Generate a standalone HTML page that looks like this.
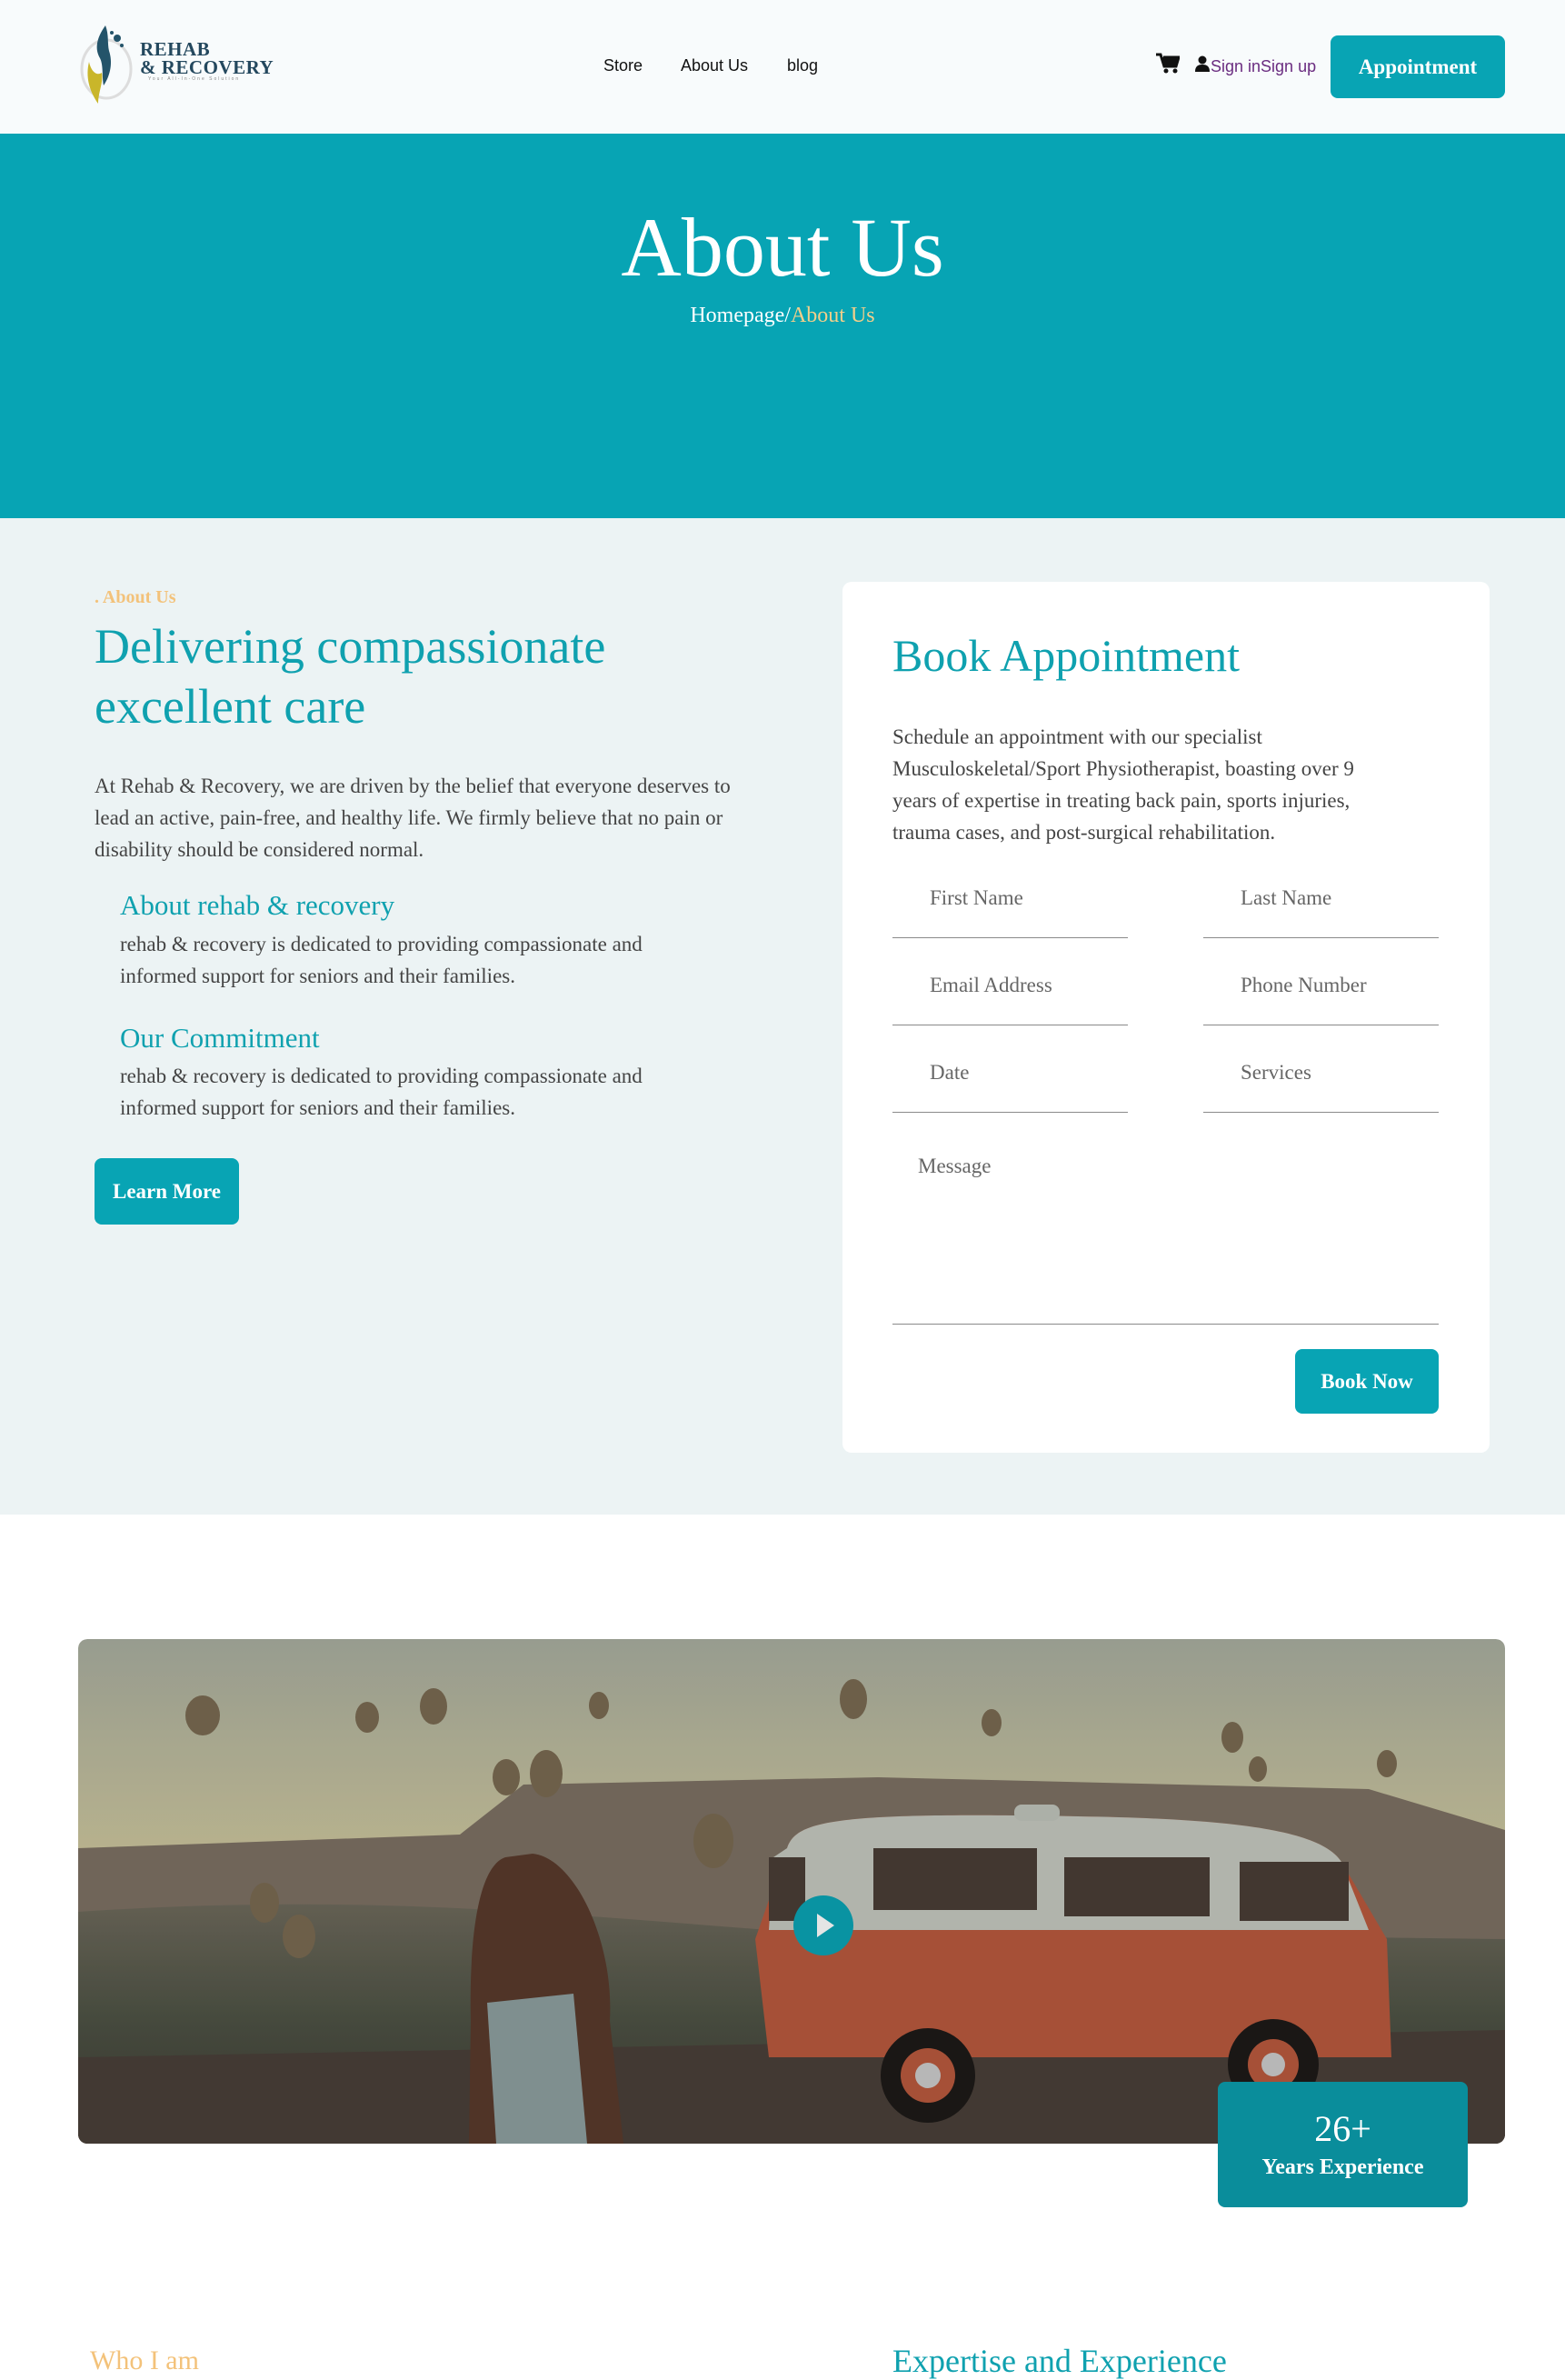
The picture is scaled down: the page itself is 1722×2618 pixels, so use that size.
<!DOCTYPE html>
<html><head><meta charset="utf-8">
<style>
*{margin:0;padding:0;box-sizing:border-box}
body{width:1722px;height:2592px;overflow:hidden;background:#fff;font-family:"Liberation Serif",serif;position:relative}
.abs{position:absolute}
.nav{left:0;top:0;width:1722px;height:147px;background:#f8fbfc}
.navlink{font-family:"Liberation Sans",sans-serif;font-size:18px;color:#111;top:62px}
.btn{background:#08a4b4;color:#fff;border-radius:8px;font-weight:bold;display:flex;align-items:center;justify-content:center}
.hero{left:0;top:147px;width:1722px;height:423px;background:#07a4b4}
.sec{left:0;top:570px;width:1722px;height:1096px;background:#ecf3f4}
.teal{color:#0fa1af}
.p{font-size:23px;line-height:35px;color:#444}
.card{left:927px;top:640px;width:712px;height:958px;background:#fff;border-radius:10px}
.field{border-bottom:1.5px solid #8a8a8a;font-size:23px;color:#666;padding-left:41px}
</style></head><body>
<div class="abs nav"></div>
<svg class="abs" style="left:84px;top:24px" width="70" height="92" viewBox="0 0 70 92">
<ellipse cx="33" cy="52" rx="27" ry="32" fill="none" stroke="#ddd" stroke-width="3"/>
<path d="M32 4 C22 18 20 30 26 40 C30 48 28 60 30 70 C38 58 40 44 36 32 C34 24 36 14 32 4Z" fill="#24546a"/>
<path d="M14 44 C10 60 14 76 24 90 C24 78 30 66 28 56 C22 60 16 54 14 44Z" fill="#c9b62a"/>
<circle cx="45" cy="18" r="4" fill="#24546a"/><circle cx="39" cy="12" r="2" fill="#24546a"/><circle cx="50" cy="26" r="2" fill="#24546a"/>
</svg>
<div class="abs" style="left:154px;top:44px;font-size:21px;line-height:20px;color:#24485e;font-weight:bold;letter-spacing:0.5px">REHAB<br>&amp; RECOVERY</div>
<div class="abs" style="left:163px;top:84px;font-size:5px;color:#888;letter-spacing:2px;font-family:'Liberation Sans',sans-serif">Your All-In-One Solution</div>
<div class="abs navlink" style="left:664px">Store</div>
<div class="abs navlink" style="left:749px">About Us</div>
<div class="abs navlink" style="left:866px">blog</div>
<svg class="abs" style="left:1272px;top:58px" width="26" height="24" viewBox="0 0 26 24"><path d="M0 2h5l4 13h13l3-10H8" fill="none" stroke="#111" stroke-width="3"/><path d="M7 5h18l-3 10H10z" fill="#111"/><circle cx="11" cy="20" r="2.5" fill="#111"/><circle cx="21" cy="20" r="2.5" fill="#111"/></svg>
<svg class="abs" style="left:1315px;top:61px" width="16" height="18" viewBox="0 0 16 18"><circle cx="8" cy="5" r="4.5" fill="#111"/><path d="M0 18c0-6 3-8 8-8s8 2 8 8z" fill="#111"/></svg>
<div class="abs" style="left:1332px;top:63px;font-family:'Liberation Sans',sans-serif;font-size:18px;color:#6a2c80">Sign inSign up</div>
<div class="abs btn" style="left:1464px;top:39px;width:192px;height:69px;font-size:23px">Appointment</div>

<div class="abs hero"></div>
<div class="abs" style="left:0;top:212px;width:1722px;text-align:center;color:#fff;font-size:92px;line-height:120px">About Us</div>
<div class="abs" style="left:0;top:334px;width:1722px;text-align:center;color:#fff;font-size:24px">Homepage/<span style="color:#f3cf8a">About Us</span></div>

<div class="abs sec"></div>
<div class="abs" style="left:104px;top:646px;font-size:20px;color:#f3c27a;font-weight:bold">. About Us</div>
<div class="abs teal" style="left:104px;top:678px;font-size:54px;line-height:66px">Delivering compassionate<br>excellent care</div>
<div class="abs p" style="left:104px;top:847px;width:735px">At Rehab &amp; Recovery, we are driven by the belief that everyone deserves to lead an active, pain-free, and healthy life. We firmly believe that no pain or disability should be considered normal.</div>
<div class="abs teal" style="left:132px;top:978px;font-size:31px">About rehab &amp; recovery</div>
<div class="abs p" style="left:132px;top:1021px;width:640px">rehab &amp; recovery is dedicated to providing compassionate and informed support for seniors and their families.</div>
<div class="abs teal" style="left:132px;top:1124px;font-size:31px">Our Commitment</div>
<div class="abs p" style="left:132px;top:1166px;width:640px">rehab &amp; recovery is dedicated to providing compassionate and informed support for seniors and their families.</div>
<div class="abs btn" style="left:104px;top:1274px;width:159px;height:73px;font-size:23px">Learn More</div>

<div class="abs card"></div>
<div class="abs teal" style="left:982px;top:692px;font-size:50px">Book Appointment</div>
<div class="abs p" style="left:982px;top:793px;width:560px">Schedule an appointment with our specialist Musculoskeletal/Sport Physiotherapist, boasting over 9 years of expertise in treating back pain, sports injuries, trauma cases, and post-surgical rehabilitation.</div>
<div class="abs field" style="left:982px;top:975px;width:259px;height:57px">First Name</div>
<div class="abs field" style="left:1324px;top:975px;width:259px;height:57px">Last Name</div>
<div class="abs field" style="left:982px;top:1071px;width:259px;height:57px">Email Address</div>
<div class="abs field" style="left:1324px;top:1071px;width:259px;height:57px">Phone Number</div>
<div class="abs field" style="left:982px;top:1167px;width:259px;height:57px">Date</div>
<div class="abs field" style="left:1324px;top:1167px;width:259px;height:57px">Services</div>
<div class="abs field" style="left:982px;top:1270px;width:601px;height:187px;padding-left:28px">Message</div>
<div class="abs btn" style="left:1425px;top:1484px;width:158px;height:71px;font-size:23px">Book Now</div>

<svg class="abs" style="left:86px;top:1803px;border-radius:10px" width="1570" height="555" viewBox="0 0 1570 555">
<defs>
<linearGradient id="sky" x1="0" y1="0" x2="0" y2="1"><stop offset="0" stop-color="#a9aea0"/><stop offset="0.45" stop-color="#cfc89e"/><stop offset="1" stop-color="#8f8a78"/></linearGradient>
<linearGradient id="gr" x1="0" y1="0" x2="0" y2="1"><stop offset="0" stop-color="#6e6a5c"/><stop offset="0.5" stop-color="#4d5244"/><stop offset="1" stop-color="#3f3a34"/></linearGradient>
<clipPath id="c"><rect width="1570" height="555" rx="10"/></clipPath>
</defs>
<g clip-path="url(#c)">
<rect width="1570" height="555" fill="url(#sky)"/>
<path d="M0 230 L420 215 L490 160 L880 152 L1420 165 L1570 210 L1570 555 L0 555Z" fill="#7d7164"/>
<path d="M0 300 C300 280 500 300 760 320 L1570 330 L1570 555 L0 555Z" fill="url(#gr)"/>
<path d="M0 460 L1570 430 L1570 555 L0 555Z" fill="#4a4039"/>
<g fill="#7a6a52"><ellipse cx="137" cy="84" rx="19" ry="22"/><ellipse cx="318" cy="86" rx="13" ry="17"/><ellipse cx="391" cy="74" rx="15" ry="20"/><ellipse cx="573" cy="73" rx="11" ry="15"/><ellipse cx="853" cy="66" rx="15" ry="22"/><ellipse cx="1005" cy="92" rx="11" ry="15"/><ellipse cx="471" cy="152" rx="15" ry="20"/><ellipse cx="515" cy="148" rx="18" ry="26"/><ellipse cx="699" cy="222" rx="22" ry="30"/><ellipse cx="1270" cy="108" rx="12" ry="17"/><ellipse cx="1298" cy="143" rx="10" ry="14"/><ellipse cx="1440" cy="137" rx="11" ry="15"/><ellipse cx="243" cy="327" rx="18" ry="24"/><ellipse cx="205" cy="290" rx="16" ry="22"/></g>
<path d="M780 230 C790 200 830 190 1100 195 C1300 198 1370 215 1390 245 L1440 330 L1445 460 L760 460 L745 330Z" fill="#b95a3e"/>
<path d="M780 230 C790 200 830 190 1100 195 C1300 198 1370 215 1390 245 L1420 320 L760 320 L765 240Z" fill="#c6c9c0"/>
<rect x="875" y="230" width="180" height="68" fill="#4a3e36"/><rect x="1085" y="240" width="160" height="65" fill="#4a3e36"/><rect x="1278" y="245" width="120" height="65" fill="#4a3e36"/><rect x="760" y="240" width="40" height="70" fill="#4a3e36"/>
<rect x="1030" y="182" width="50" height="18" rx="8" fill="#c0c4bb"/>
<circle cx="935" cy="480" r="52" fill="#1e1a18"/><circle cx="935" cy="480" r="30" fill="#b95a3e"/><circle cx="935" cy="480" r="14" fill="#ccc"/>
<circle cx="1315" cy="468" r="50" fill="#1e1a18"/><circle cx="1315" cy="468" r="28" fill="#b95a3e"/><circle cx="1315" cy="468" r="13" fill="#ccc"/>
<path d="M470 240 C440 250 430 330 432 420 L430 555 L600 555 L585 420 C590 330 545 240 500 236Z" fill="#5a3a2c"/>
<path d="M450 400 L460 555 L560 555 L545 390Z" fill="#8ea0a0"/>
<circle cx="820" cy="315" r="33" fill="#0ba4b5"/><path d="M813 302 L832 315 L813 328Z" fill="#fff"/>
<rect width="1570" height="555" fill="#000" opacity="0.1"/>
</g></svg>
<div class="abs" style="left:1340px;top:2290px;width:275px;height:138px;background:#0a8d9b;border-radius:8px;color:#fff;text-align:center">
<div style="font-size:40px;margin-top:28px">26+</div>
<div style="font-size:24px;font-weight:bold;margin-top:6px">Years Experience</div></div>
<div class="abs" style="left:99px;top:2580px;font-size:30px;color:#f3c27a">Who I am</div>
<div class="abs teal" style="left:982px;top:2576px;font-size:36px">Expertise and Experience</div>
</body></html>
